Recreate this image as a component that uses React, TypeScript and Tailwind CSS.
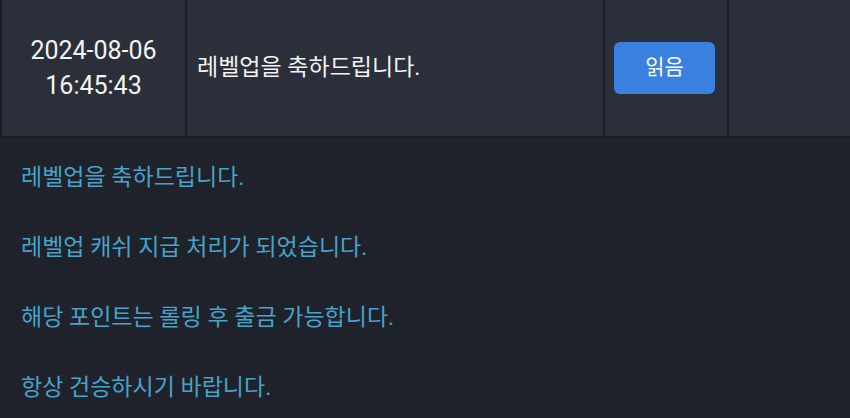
import React from 'react';

const lines = [
  '레벨업을 축하드립니다.',
  '레벨업 캐쉬 지급 처리가 되었습니다.',
  '해당 포인트는 롤링 후 출금 가능합니다.',
  '항상 건승하시기 바랍니다.',
];

export default function App() {
  return (
    <div
      className="w-[850px] h-[418px] overflow-hidden bg-[#1f222a]"
      style={{ fontFamily: 'Roboto, "Noto Sans CJK KR", sans-serif' }}
    >
      {/* message header row */}
      <div className="grid grid-cols-[185px_418px_124px_1fr] h-[138px] bg-[#2b2f39] border-b-2 border-l-2 border-[#191c22]">
        <div className="flex flex-col items-center justify-center border-r-2 border-[#1b1e24] text-[25px] leading-[35px] text-[#f2f3f5]">
          <span>2024-08-06</span>
          <span>16:45:43</span>
        </div>
        <div className="flex items-center pl-[10px] border-r-2 border-[#1b1e24] text-[23px] text-[#f2f3f5]">
          레벨업을 축하드립니다.
        </div>
        <div className="flex items-center justify-center pr-[3px] border-r-2 border-[#1b1e24]">
          <button className="w-[101px] h-[52px] rounded-[6px] bg-[#3a80de] text-white text-[21px]">
            읽음
          </button>
        </div>
        <div />
      </div>

      {/* message body */}
      <div className="flex flex-col gap-[46px] pl-[21px] pt-[28px] text-[23px] leading-[24px] text-[#47a3c9]">
        {lines.map((t) => (
          <p key={t}>{t}</p>
        ))}
      </div>
    </div>
  );
}
